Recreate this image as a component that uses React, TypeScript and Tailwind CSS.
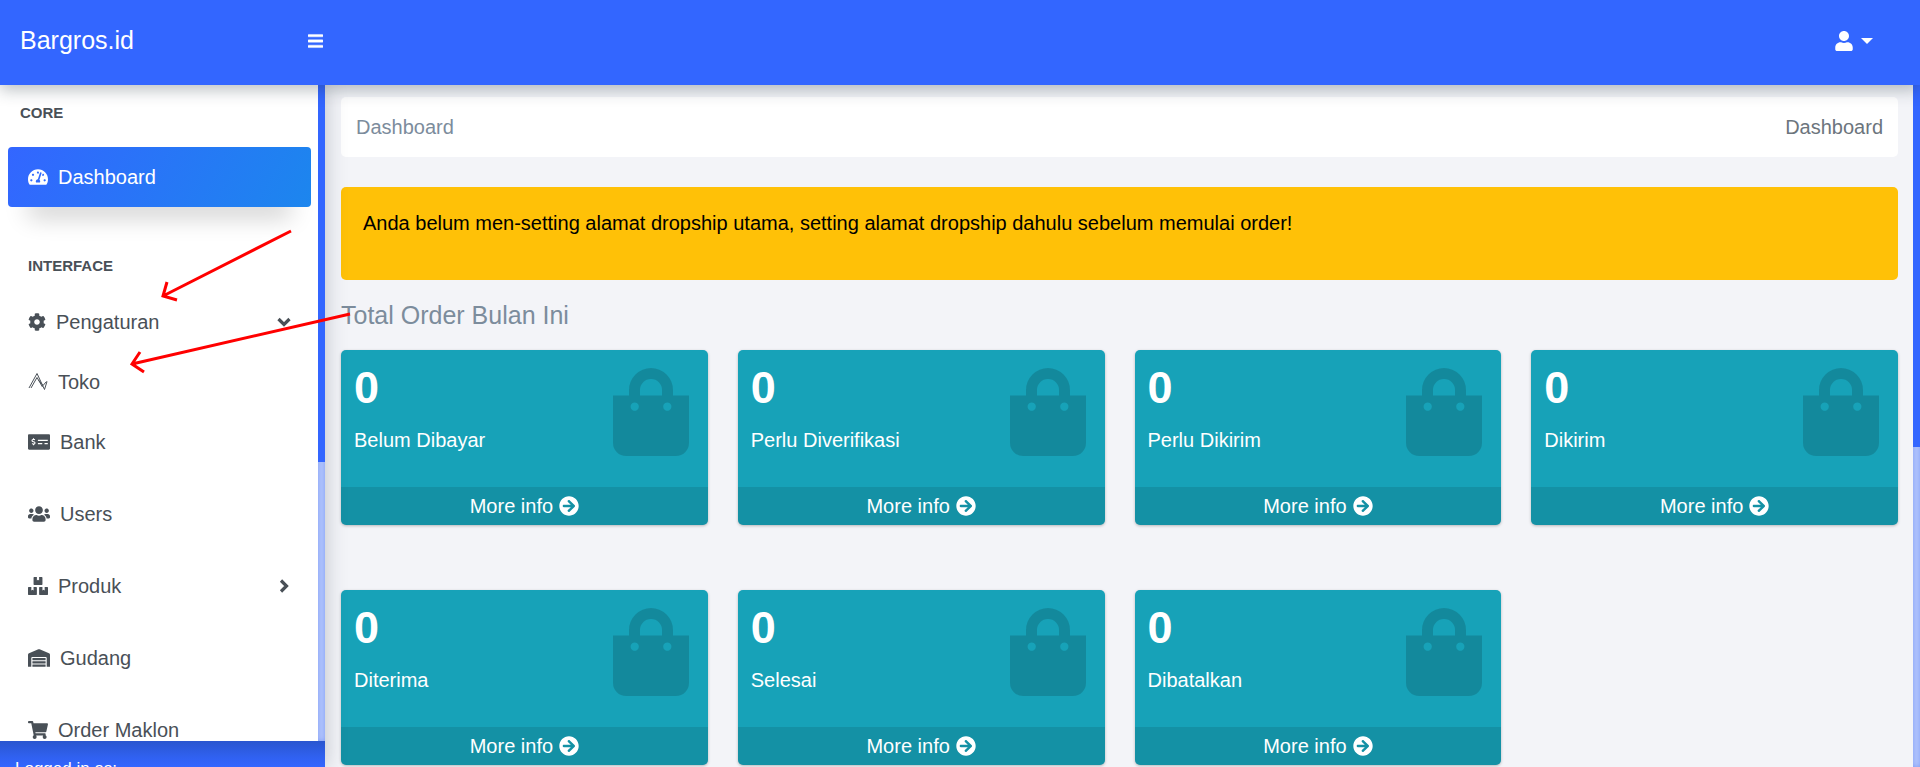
import React from "react";
import {
  FaTachometerAlt,
  FaCog,
  FaMoneyCheckAlt,
  FaUsers,
  FaBoxes,
  FaWarehouse,
  FaShoppingCart,
  FaBars,
  FaUser,
  FaArrowCircleRight,
} from "react-icons/fa";

function PeaksIcon({ className }: { className?: string }) {
  return (
    <svg viewBox="0 0 20 20" className={className} fill="none" stroke="currentColor" strokeWidth="1" aria-hidden="true">
      <path d="M1 16 9 1.5l7.5 16 2.5-8" />
      <path d="M3 16 9 5.5l5.5 9.5" />
      <path d="M10.5 8 15 13.5l3.5-4" />
    </svg>
  );
}

function Chevron({ className }: { className?: string }) {
  return (
    <svg viewBox="0 0 14 14" className={className} fill="none" stroke="currentColor" strokeWidth="3.2" aria-hidden="true">
      <path d="M1.5 4 7 9.5l5.5-5.5" />
    </svg>
  );
}

function BagIcon({ className }: { className?: string }) {
  return (
    <svg viewBox="0 0 76 88" className={className} fill="currentColor" aria-hidden="true">
      <path
        fillRule="evenodd"
        d="M0 27.5H16V22a22 22 0 0 1 44 0v5.5H76V75a13 13 0 0 1-13 13H13A13 13 0 0 1 0 75ZM27 27.5H49V22a11 11 0 0 0-22 0ZM21.7 34.5a4.1 4.1 0 1 0 0.01 0ZM54.3 34.5a4.1 4.1 0 1 0 0.01 0Z"
      />
    </svg>
  );
}

type Item = {
  label: string;
  icon: React.ReactNode;
  chevron?: "down" | "right";
};

const settingItems: Item[] = [
  { label: "Pengaturan", icon: <FaCog className="h-[18px] w-[18px]" />, chevron: "down" },
  { label: "Toko", icon: <PeaksIcon className="h-5 w-5" /> },
];

const menuItems: Item[] = [
  { label: "Bank", icon: <FaMoneyCheckAlt className="h-[18px] w-[22px]" /> },
  { label: "Users", icon: <FaUsers className="h-[18px] w-[22px]" /> },
  { label: "Produk", icon: <FaBoxes className="h-[18px] w-5" />, chevron: "right" },
  { label: "Gudang", icon: <FaWarehouse className="h-[18px] w-[22px]" /> },
  { label: "Order Maklon", icon: <FaShoppingCart className="h-[18px] w-5" /> },
];

function NavItem({ item }: { item: Item }) {
  return (
    <a href="#" className="flex h-[60px] shrink-0 items-center gap-[10px] px-5 text-[20px] text-[#495057]">
      {item.icon}
      <span>{item.label}</span>
      {item.chevron === "down" && <Chevron className="ml-auto h-[14px] w-[14px]" />}
      {item.chevron === "right" && <Chevron className="ml-auto h-[14px] w-[14px] -rotate-90" />}
    </a>
  );
}

const cards = ["Belum Dibayar", "Perlu Diverifikasi", "Perlu Dikirim", "Dikirim", "Diterima", "Selesai", "Dibatalkan"];

function StatCard({ label }: { label: string }) {
  return (
    <section className="flex flex-col overflow-hidden rounded-[5px] bg-[#17a2b8] text-white shadow-[0_1px_3px_rgba(0,0,0,0.25)]">
      <div className="flex h-[137px] items-start justify-between pt-[18px] pr-[19px] pl-[13px]">
        <div>
          <h3 className="text-[45px] leading-[39px] font-bold">0</h3>
          <p className="mt-[18px] text-[20px] leading-[30px]">{label}</p>
        </div>
        <BagIcon className="h-[88px] w-[76px] text-black/15" />
      </div>
      <a href="#" className="flex h-[38px] items-center justify-center gap-[6px] bg-black/10 text-[20px]">
        More info
        <FaArrowCircleRight className="h-5 w-5" />
      </a>
    </section>
  );
}

function ScrollTrack({ thumb }: { thumb: string }) {
  return (
    <div className="w-[7px] shrink-0 bg-[#b3c5fd] shadow-[inset_0_0_5px_#7f9cf5]">
      <div className={"bg-[#3366ff] " + thumb} />
    </div>
  );
}

function Arrows() {
  return (
    <svg
      className="pointer-events-none absolute top-[220px] left-[120px] z-30 h-[160px] w-[240px]"
      viewBox="120 220 240 160"
      fill="none"
      stroke="#ff0000"
      strokeWidth="3"
      aria-hidden="true"
    >
      <path d="M291 231 163 296M167 282l-4 14 14 4" />
      <path d="M350 314 132 364M140 352l-8 12 12 8" />
    </svg>
  );
}

export default function App() {
  return (
    <div className="relative flex h-screen flex-col overflow-hidden bg-[#f3f4f8] font-['Liberation_Sans',Arial,sans-serif]">
      <header className="relative z-20 flex h-[85px] shrink-0 items-center bg-[#3366ff] pr-[47px] pb-1 pl-5 text-white shadow-[0_5px_15px_rgba(31,45,61,0.3)]">
        <a href="#" className="w-72 text-[25px]">
          Bargros.id
        </a>
        <button type="button" aria-label="Toggle menu">
          <FaBars className="h-[18px] w-[15px]" stroke="currentColor" strokeWidth="12" />
        </button>
        <button type="button" aria-label="Account" className="ml-auto flex items-center gap-2">
          <FaUser className="h-5 w-[18px]" />
          <span className="border-x-[6px] border-t-[6px] border-x-transparent border-t-white" />
        </button>
      </header>

      <div className="flex min-h-0 flex-1">
        <aside className="relative z-10 flex w-[325px] shrink-0 flex-col bg-white shadow-[0_0_20px_rgba(31,45,61,0.25)]">
          <div className="flex min-h-0 flex-1">
            <nav className="flex min-w-0 flex-1 flex-col overflow-hidden pt-4 pr-[7px] pl-2">
              <h2 className="px-3 text-[15px] leading-[24px] font-bold text-[#495057]">CORE</h2>
              <a
                href="#"
                className="mt-[22px] flex h-[60px] shrink-0 items-center gap-[10px] rounded-[4px] bg-[linear-gradient(118deg,#3366ff,#1c86ee)] px-5 text-[20px] text-white shadow-[0_30px_25px_-20px_rgba(0,0,0,0.2)]"
              >
                <FaTachometerAlt className="h-[18px] w-5" />
                <span>Dashboard</span>
              </a>
              <h2 className="mt-[47px] px-5 text-[15px] leading-[24px] font-bold text-[#495057]">INTERFACE</h2>
              <div className="mt-[14px] flex flex-col">
                {settingItems.map((item) => (
                  <NavItem key={item.label} item={item} />
                ))}
              </div>
              <div className="flex flex-col gap-3">
                {menuItems.map((item) => (
                  <NavItem key={item.label} item={item} />
                ))}
              </div>
            </nav>
            <ScrollTrack thumb="h-[377px]" />
          </div>
          <footer className="h-[26px] overflow-hidden bg-[linear-gradient(#2a56cf,#3061f0_16px,#3366ff)] px-[15px] pt-[17px] text-[17px] leading-[22px] text-white">
            Logged in as:
          </footer>
        </aside>

        <main className="min-w-0 flex-1 overflow-hidden pt-3 pr-[15px] pl-4">
          <div className="flex h-[60px] items-center justify-between rounded-[5px] bg-white px-[15px] text-[20px]">
            <h1 className="text-[#7c8c9c]">Dashboard</h1>
            <span className="text-[#6c757d]">Dashboard</span>
          </div>
          <div role="alert" className="mt-[30px] h-[93px] rounded-[5px] bg-[#ffc107] px-[22px] pt-[21px] text-[20px] leading-[30px] text-black">
            Anda belum men-setting alamat dropship utama, setting alamat dropship dahulu sebelum memulai order!
          </div>
          <h2 className="mt-5 text-[25px] leading-[30px] text-[#7c8c9c]">Total Order Bulan Ini</h2>
          <div className="mt-5 grid grid-cols-4 gap-x-[30px] gap-y-[65px] pb-4">
            {cards.map((label) => (
              <StatCard key={label} label={label} />
            ))}
          </div>
        </main>
        <ScrollTrack thumb="h-[362px]" />
      </div>
      <Arrows />
    </div>
  );
}
